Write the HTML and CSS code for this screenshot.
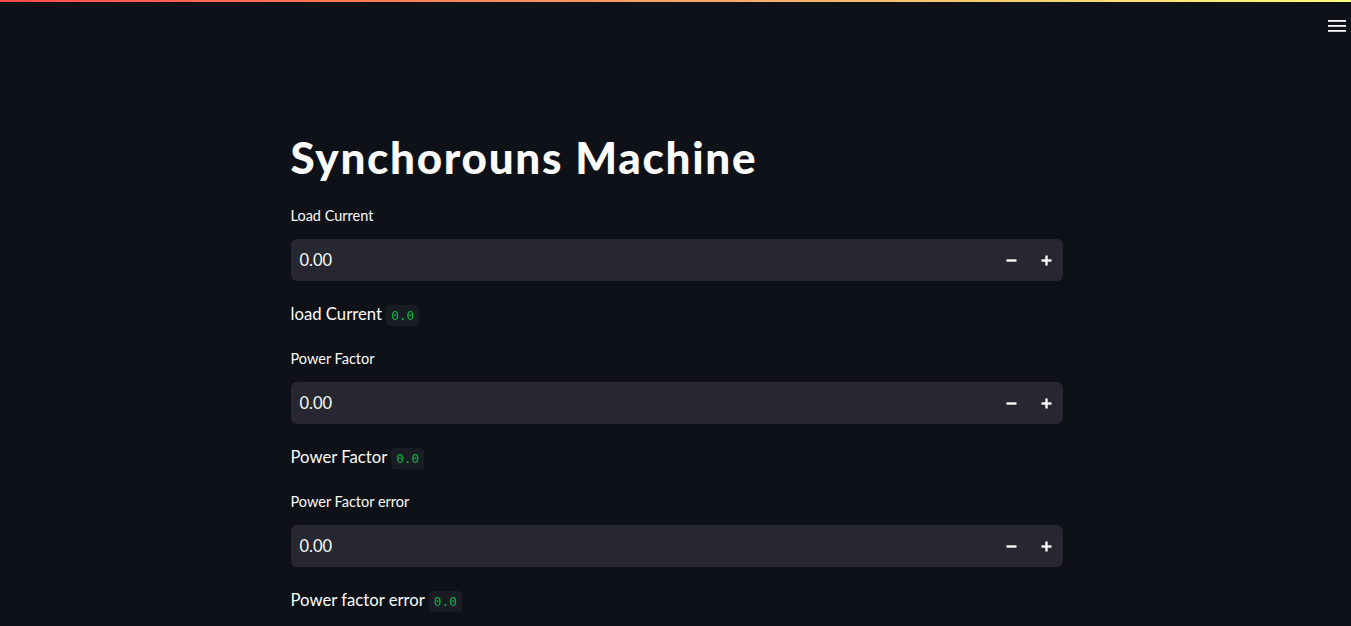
FILE: index.html
```html
<!DOCTYPE html>
<html>
<head>
<meta charset="utf-8">
<link rel="stylesheet" href="styles.css">
</head>
<body>
<div class="decoration"></div>
<header class="header">
  <button class="menu" aria-label="menu">
    <svg width="18" height="14" viewBox="0 0 18 14"><rect x="0" y="1" width="18" height="1.8" fill="#fafafa"/><rect x="0" y="6" width="18" height="1.8" fill="#fafafa"/><rect x="0" y="11" width="18" height="1.8" fill="#fafafa"/></svg>
  </button>
</header>
<main class="main">
  <h1 class="title">Synchorouns Machine</h1>

  <section class="widget">
    <label class="label">Load Current</label>
    <div class="number-input">
      <span class="value">0.00</span>
      <div class="steps">
        <span class="step"><svg width="11" height="11" viewBox="0 0 11 11"><rect x="0.5" y="4.3" width="10" height="2.4" fill="#fafafa"/></svg></span>
        <span class="step"><svg width="11" height="11" viewBox="0 0 11 11"><rect x="0.5" y="4.3" width="10" height="2.4" fill="#fafafa"/><rect x="4.3" y="0.5" width="2.4" height="10" fill="#fafafa"/></svg></span>
      </div>
    </div>
  </section>
  <p class="md">load Current <code class="code">0.0</code></p>

  <section class="widget">
    <label class="label">Power Factor</label>
    <div class="number-input">
      <span class="value">0.00</span>
      <div class="steps">
        <span class="step"><svg width="11" height="11" viewBox="0 0 11 11"><rect x="0.5" y="4.3" width="10" height="2.4" fill="#fafafa"/></svg></span>
        <span class="step"><svg width="11" height="11" viewBox="0 0 11 11"><rect x="0.5" y="4.3" width="10" height="2.4" fill="#fafafa"/><rect x="4.3" y="0.5" width="2.4" height="10" fill="#fafafa"/></svg></span>
      </div>
    </div>
  </section>
  <p class="md">Power Factor <code class="code">0.0</code></p>

  <section class="widget">
    <label class="label">Power Factor error</label>
    <div class="number-input">
      <span class="value">0.00</span>
      <div class="steps">
        <span class="step"><svg width="11" height="11" viewBox="0 0 11 11"><rect x="0.5" y="4.3" width="10" height="2.4" fill="#fafafa"/></svg></span>
        <span class="step"><svg width="11" height="11" viewBox="0 0 11 11"><rect x="0.5" y="4.3" width="10" height="2.4" fill="#fafafa"/><rect x="4.3" y="0.5" width="2.4" height="10" fill="#fafafa"/></svg></span>
      </div>
    </div>
  </section>
  <p class="md">Power factor error <code class="code">0.0</code></p>
</main>
</body>
</html>
```
FILE: styles.css
```css
html, body {
  margin: 0;
  padding: 0;
  background: #0e1117;
  color: #fafafa;
  font-family: Lato, "Noto Sans", sans-serif;
  height: 626px;
  overflow: hidden;
}
.decoration {
  height: 2px;
  background: linear-gradient(90deg, #ff4b4b, #fffd80);
}
.header {
  display: flex;
  justify-content: flex-end;
  height: 36px;
  padding: 16px 4px 0 0;
  box-sizing: border-box;
}
.menu {
  background: none;
  border: 0;
  padding: 0;
  width: 20px;
  height: 16px;
  display: flex;
  align-items: center;
  justify-content: center;
}
.main {
  width: 772px;
  margin: 0 auto;
  padding: 91px 0 0 2px;
  display: flex;
  flex-direction: column;
}
.title {
  margin: 0 0 21px;
  font-size: 44px;
  font-weight: 900;
  line-height: 56px;
  letter-spacing: 1.7px;
}
.widget {
  display: flex;
  flex-direction: column;
}
.label {
  font-size: 14.5px;
  line-height: 20px;
  margin-bottom: 13px;
}
.number-input {
  height: 42px;
  background: #262730;
  border-radius: 6px;
  display: flex;
  align-items: center;
  justify-content: space-between;
  padding: 0 5px 0 9px;
}
.value {
  font-size: 16.5px;
}
.steps {
  display: flex;
  gap: 12px;
}
.step {
  width: 23px;
  height: 23px;
  display: flex;
  align-items: center;
  justify-content: center;
}
.md {
  margin: 21px 0 21px;
  font-size: 16.7px;
  line-height: 24px;
}
.code {
  font-family: "DejaVu Sans Mono", monospace;
  font-size: 12.8px;
  color: #0fb342;
  background: #1a1c24;
  border-radius: 4px;
  padding: 3px 5px;
}
```
